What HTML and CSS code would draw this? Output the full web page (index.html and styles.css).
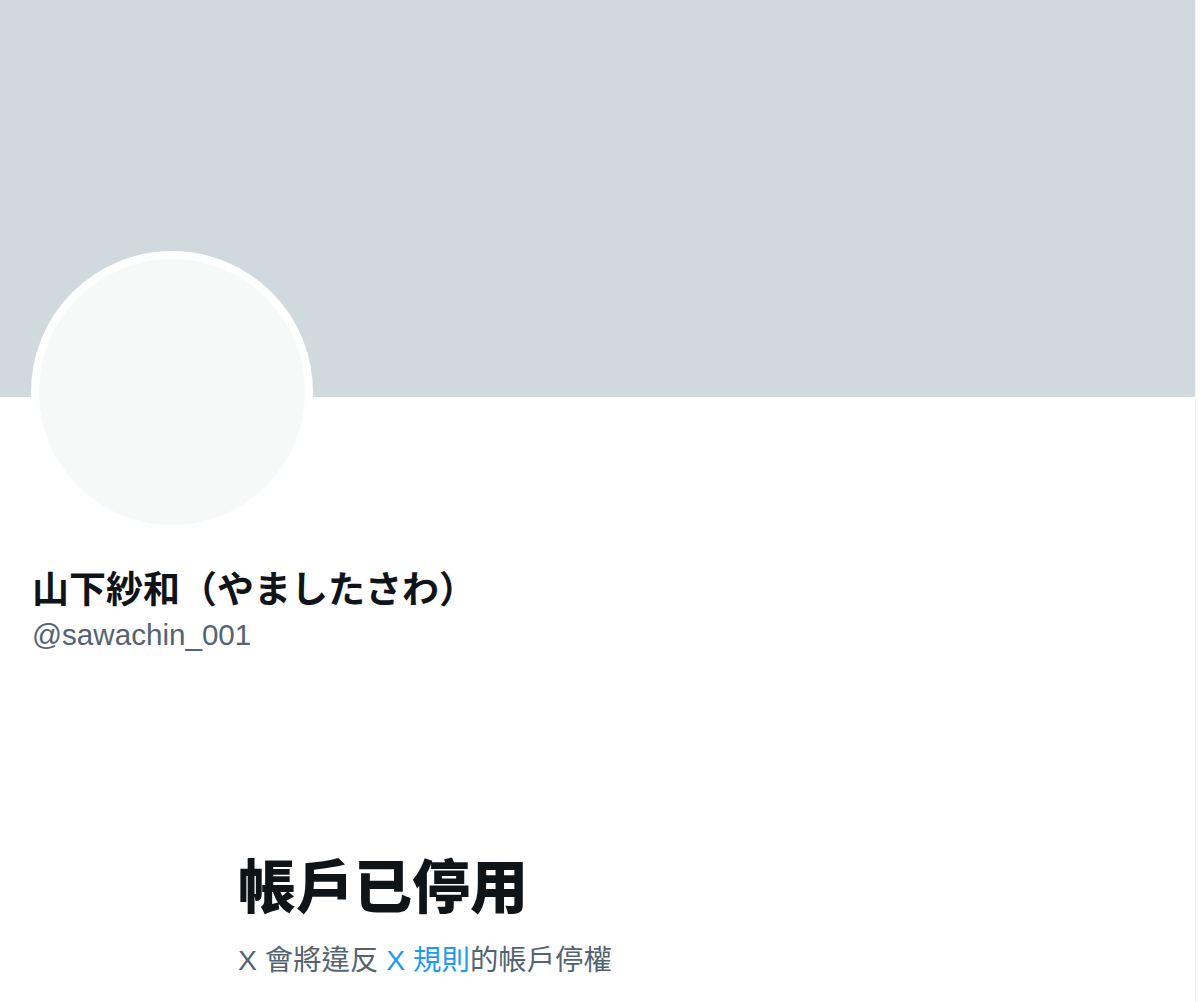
FILE: index.html
```html
<!DOCTYPE html>
<html lang="zh-Hant">
<head>
<meta charset="utf-8">
<title>帳戶已停用</title>
<link rel="stylesheet" href="styles.css">
</head>
<body>
<main class="page">
  <div class="banner"></div>
  <section class="profile">
    <div class="avatar"></div>
    <h1 class="name" lang="ja">山下紗和（やましたさわ）</h1>
    <div class="handle">@sawachin_001</div>
  </section>
  <section class="notice">
    <h2 class="notice-title">帳戶已停用</h2>
    <p class="notice-text">X 會將違反 <a class="link" href="#">X 規則</a>的帳戶停權</p>
  </section>
</main>
</body>
</html>
```

FILE: styles.css
```css
html, body {
  margin: 0;
  padding: 0;
  background: #ffffff;
}

body {
  font-family: "Liberation Sans", "Noto Sans CJK TC", sans-serif;
  color: #0f1419;
}

.page {
  width: 1195px;
  min-height: 1002px;
  border-right: 1px solid #eff3f4;
  overflow: hidden;
}

.banner {
  height: 397px;
  background: #cfd9de;
}

.profile {
  padding: 0 32px;
}

.avatar {
  width: 266px;
  height: 266px;
  margin-top: -146px;
  margin-left: -1px;
  border: 8px solid #ffffff;
  border-radius: 50%;
  background: #f7f9f9;
}

.name {
  margin: 36px 0 0;
  font-family: "Liberation Sans", "Noto Sans CJK JP", sans-serif;
  font-size: 37px;
  line-height: 44px;
  font-weight: 700;
  color: #0f1419;
}

.handle {
  margin-top: 4px;
  font-size: 29.6px;
  line-height: 36px;
  color: #536471;
}

.notice {
  padding: 195px 0 0 238px;
}

.notice-title {
  margin: 0;
  font-family: "Noto Sans CJK TC", sans-serif;
  font-size: 58px;
  line-height: 70px;
  font-weight: 900;
  color: #0f1419;
}

.notice-text {
  margin: 24px 0 0;
  font-family: "Liberation Sans", "Noto Sans CJK TC", sans-serif;
  font-size: 28.4px;
  line-height: 36px;
  color: #536471;
}

.link {
  color: #1d9bf0;
  text-decoration: none;
}
```
